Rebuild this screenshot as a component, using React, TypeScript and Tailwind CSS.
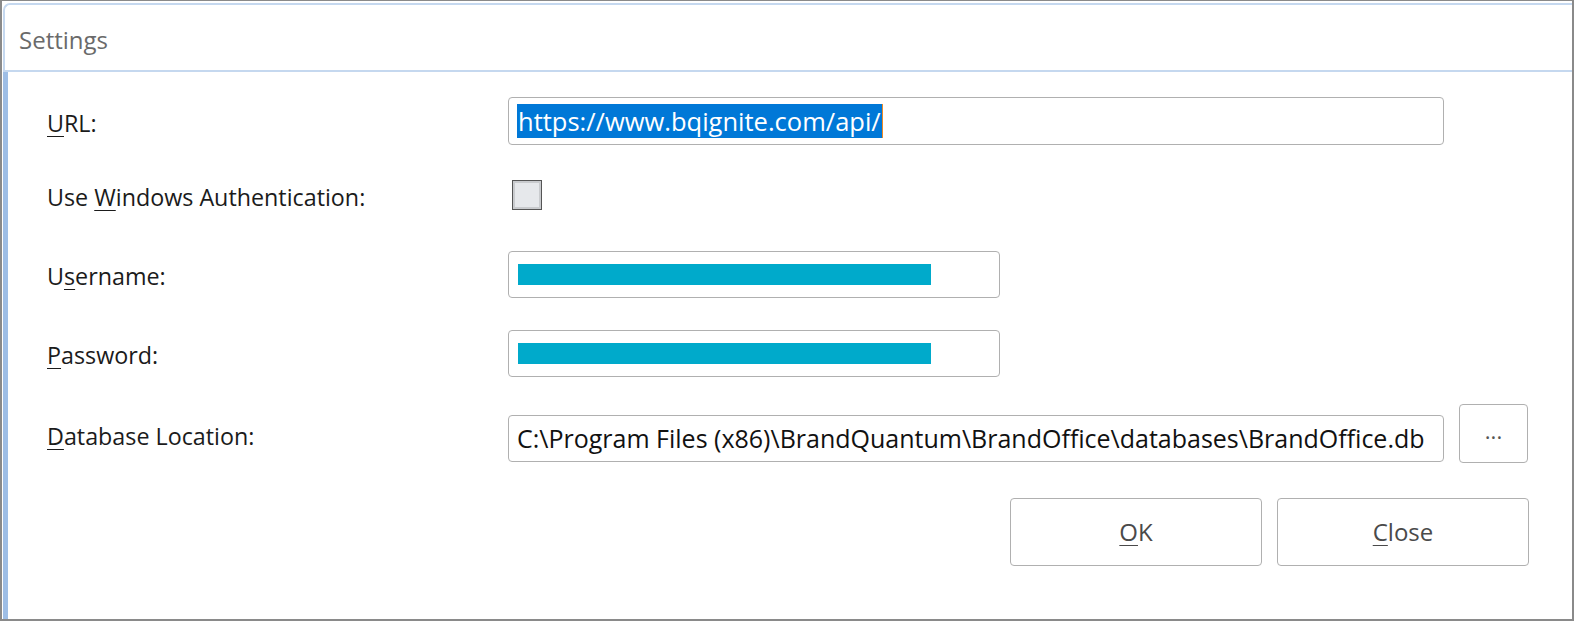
import React from "react";

const font = "font-['Open_Sans','Noto_Sans',sans-serif]";

function Key({ children }: { children: React.ReactNode }) {
  return <span className="underline decoration-1 underline-offset-[4px]">{children}</span>;
}

function Label({ children }: { children: React.ReactNode }) {
  return <div className="w-[461px] shrink-0 text-[23.3px] text-[#1b1b1b] pt-[4px]">{children}</div>;
}

function Field({ className, children }: { className: string; children?: React.ReactNode }) {
  return (
    <div className={`h-[47px] border border-[#b0b0b0] rounded-[4px] bg-white flex items-center pl-[8px] ${className}`}>
      {children}
    </div>
  );
}

function Redacted() {
  return <div className="h-[21px] w-[413px] ml-[1px] bg-[#00aacb]" />;
}

export default function App() {
  return (
    <div className={`w-[1574px] h-[621px] bg-[#8a8a8a] pt-px pl-[2px] pr-[2px] pb-[2px] ${font}`}>
      <div className="h-full bg-white pl-px pt-[2px] flex flex-col">
        {/* title bar */}
        <div className="h-[69px] shrink-0 border-t-2 border-l-2 border-b-2 border-[#c5d8ef] rounded-tl-[7px] flex items-center pl-[14px] pt-[4px]">
          <span className="text-[24px] text-[#6a6a6a]">Settings</span>
        </div>

        <div className="flex-1 flex">
          <div className="w-[5px] bg-[#9ebee6]" />
          <div className="flex-1 flex flex-col pl-[39px] pr-[43px] pt-[25px]">
            {/* URL */}
            <div className="flex items-center h-[48px]">
              <Label>
                <Key>U</Key>RL:
              </Label>
              <Field className="w-[936px] h-[48px]">
                <span className="bg-[#0078d7] text-white text-[25.5px] leading-[34px] px-px border-r border-[#f08a24]">
                  https://www.bqignite.com/api/
                </span>
              </Field>
            </div>

            {/* windows auth */}
            <div className="flex items-center h-[30px] mt-[35px]">
              <Label>
                Use <Key>W</Key>indows Authentication:
              </Label>
              <div className="ml-[4px] w-[30px] h-[30px] border border-[#555] bg-[#e6e8eb] shadow-[inset_0_0_0_2px_#c9cbce]" />
            </div>

            {/* username */}
            <div className="flex items-center h-[47px] mt-[41px]">
              <Label>
                U<Key>s</Key>ername:
              </Label>
              <Field className="w-[492px]">
                <Redacted />
              </Field>
            </div>

            {/* password */}
            <div className="flex items-center h-[47px] mt-[32px]">
              <Label>
                <Key>P</Key>assword:
              </Label>
              <Field className="w-[492px]">
                <Redacted />
              </Field>
            </div>

            {/* database */}
            <div className="flex items-start h-[59px] mt-[27px]">
              <div className="self-center mt-[2px]">
                <Label>
                  <Key>D</Key>atabase Location:
                </Label>
              </div>
              <Field className="w-[936px] mt-[11px] pl-[6px]">
                <span className="text-[25px] text-[#111] whitespace-nowrap">
                  C:\Program Files (x86)\BrandQuantum\BrandOffice\databases\BrandOffice.db
                </span>
              </Field>
              <button className="ml-[15px] w-[69px] h-[59px] border border-[#b0b0b0] rounded-[4px] bg-white text-[22px] text-[#555] pb-[6px]">
                ...
              </button>
            </div>

            {/* buttons */}
            <div className="flex justify-end gap-[15px] mt-[35px]">
              <button className="w-[252px] h-[68px] border border-[#b0b0b0] rounded-[4px] bg-white text-[24px] text-[#4a4a4a]">
                <Key>O</Key>K
              </button>
              <button className="w-[252px] h-[68px] border border-[#b0b0b0] rounded-[4px] bg-white text-[24px] text-[#4a4a4a]">
                <Key>C</Key>lose
              </button>
            </div>
          </div>
        </div>
      </div>
    </div>
  );
}
